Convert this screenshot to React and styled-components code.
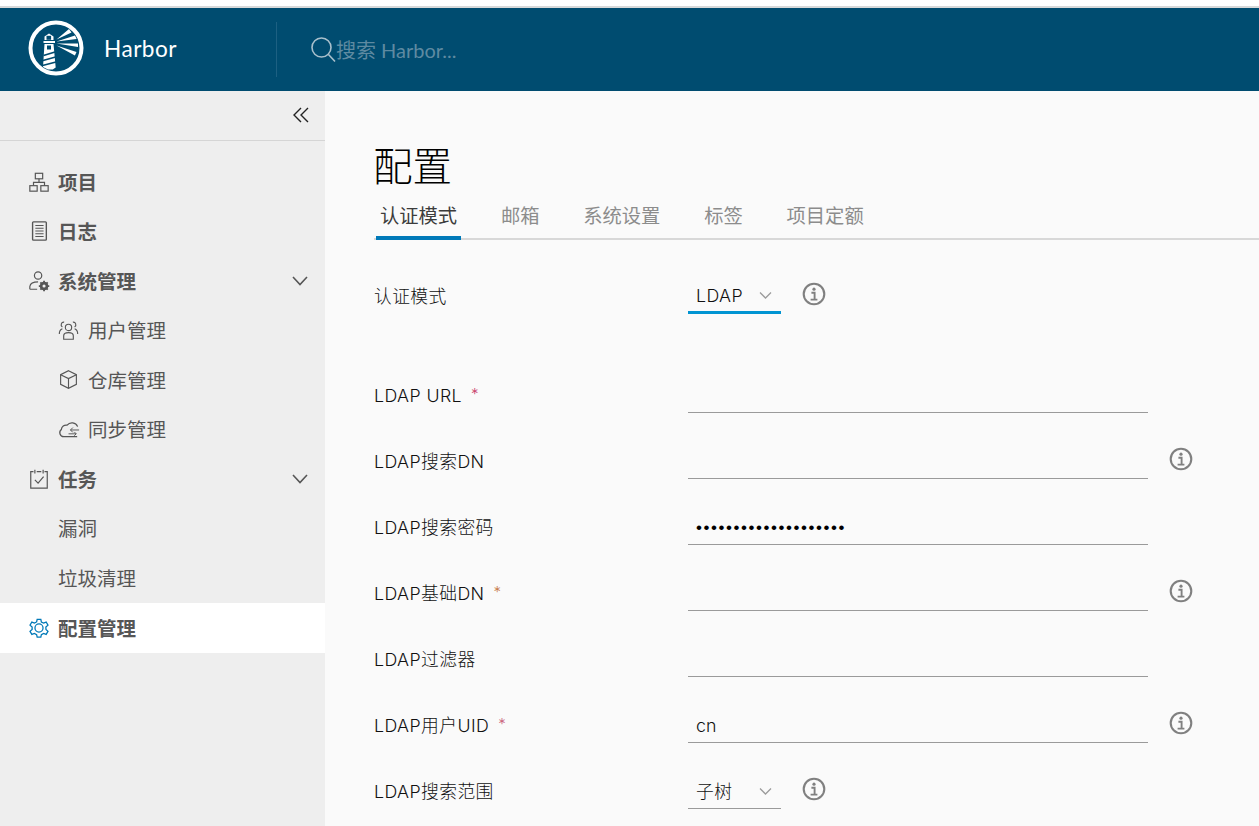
import React from 'react'
import styled, { createGlobalStyle } from 'styled-components'

const GlobalStyle = createGlobalStyle`
    html, body {
        margin: 0;
        padding: 0;
        height: 100%;
        overflow: hidden;
        background: #ffffff;
    }
    * {
        box-sizing: border-box;
    }
    body {
        font-family: "Inter", "Noto Sans CJK SC", sans-serif;
    }
`

const Page = styled.div`
    display: flex;
    flex-direction: column;
    height: 826px;
    overflow: hidden;
`

const TopStrip = styled.div`
    height: 8px;
    flex: none;
    background: #ffffff;
    border-bottom: 2px solid #d7d9da;
`

const Header = styled.header`
    display: flex;
    align-items: center;
    height: 83px;
    flex: none;
    background: #004c70;
`

const Brand = styled.div`
    display: flex;
    align-items: center;
    width: 277px;
    height: 55px;
    padding-left: 28px;
    padding-bottom: 3px;
    border-right: 1px solid #1d6082;
    color: #ffffff;
    font-size: 22.6px;
    font-family: "Lato", "Noto Sans CJK SC", sans-serif;
    letter-spacing: 0.5px;

    svg {
        margin-right: 20px;
    }
`

const Search = styled.div`
    display: flex;
    align-items: center;
    padding-left: 33px;
    color: #5e8aa1;
    font-size: 20px;
    font-family: "Lato", "Noto Sans CJK SC", sans-serif;
`

const Body = styled.div`
    display: flex;
    flex: 1;
    min-height: 0;
`

const Sidebar = styled.aside`
    width: 325px;
    flex: none;
    background: #eeeeee;
`

const Collapse = styled.div`
    display: flex;
    align-items: center;
    justify-content: flex-end;
    height: 50px;
    padding: 0 15px 2px 0;
    border-bottom: 1px solid #d5d5d5;
`

const NavList = styled.nav`
    display: flex;
    flex-direction: column;
    padding-top: 16px;
`

const NavRow = styled.div`
    display: flex;
    align-items: center;
    height: ${p => (p.$active ? '50px' : '49.5px')};
    padding-left: ${p => (p.$sub ? '58px' : '28px')};
    padding-right: 16px;
    background: ${p => (p.$active ? '#ffffff' : 'transparent')};
    color: #565656;
    font-size: 19.5px;
    line-height: 26px;
    font-weight: ${p => (p.$sub ? 400 : 700)};
    font-family: "Noto Sans CJK SC", sans-serif;
`

const NavIcon = styled.span`
    display: flex;
    width: 30px;
    flex: none;
`

const Chevron = styled.span`
    display: flex;
    margin-left: auto;
`

const Main = styled.main`
    flex: 1;
    min-width: 0;
    padding: 47px 0 0 49px;
    background: #fafafa;
`

const Title = styled.h1`
    margin: 0 0 0 -1px;
    height: 52px;
    color: #000000;
    font-size: 39.5px;
    line-height: 52px;
    font-weight: 300;
    font-family: "Noto Sans CJK SC", sans-serif;
`

const Tabs = styled.div`
    display: flex;
    gap: 35.8px;
    height: 50px;
    padding-left: 2px;
    border-bottom: 2px solid #d8d8d8;
`

const Tab = styled.div`
    height: 50px;
    padding: 11px 4px 0;
    color: ${p => (p.$active ? '#3c3c3c' : '#8c8c8c')};
    font-size: 19.3px;
    line-height: 28px;
    border-bottom: 4px solid ${p => (p.$active ? '#0079b8' : 'transparent')};
    font-family: "Noto Sans CJK SC", sans-serif;
`

const Form = styled.div`
    display: flex;
    flex-direction: column;
    padding-top: 24px;
`

const Row = styled.div`
    display: flex;
    align-items: center;
    height: 66px;
    margin-bottom: ${p => p.$gap || 0}px;
`

const Label = styled.label`
    display: flex;
    width: 314px;
    flex: none;
    color: #111111;
    font-size: 17.8px;
    font-weight: 300;
    line-height: 24px;
    letter-spacing: 0.4px;
`

const Required = styled.span`
    margin-left: 9px;
    color: ${p => p.$tone || '#c9406a'};
    font-size: 15px;
    line-height: 20px;
`

const Input = styled.div`
    display: flex;
    align-items: center;
    width: 460px;
    height: 34px;
    padding-left: 8px;
    border-bottom: 1px solid #9a9a9a;
    color: #111111;
    font-size: 17.8px;
    line-height: 24px;
    font-weight: 300;
`

const Dots = styled.span`
    font-size: 17px;
    letter-spacing: 1.55px;
    font-weight: 400;
    color: #000000;
    font-family: "Liberation Sans", sans-serif;
`

const Select = styled.div`
    display: flex;
    align-items: center;
    justify-content: space-between;
    width: 93px;
    height: 34px;
    padding: 0 9px 0 8px;
    border-bottom: ${p => (p.$focus ? '3px solid #0094d2' : '1px solid #9a9a9a')};
    color: #111111;
    font-size: 17.8px;
    line-height: 24px;
    font-weight: 300;
    letter-spacing: 0.4px;
`

const Info = styled.span`
    display: flex;
    margin: 0 0 6px 21px;
`

const Icon = ({ children, size = 22, color = '#565656', width = 1.3 }) => (
    <svg width={size} height={size} viewBox="0 0 24 24" fill="none" stroke={color} strokeWidth={width}>
        {children}
    </svg>
)

const InfoIcon = () => (
    <Info>
        <svg width="24" height="24" viewBox="0 0 24 24" fill="none" stroke="#808080">
            <circle cx="12" cy="12" r="10.3" strokeWidth="2.1" />
            <circle cx="12" cy="7.2" r="1.6" fill="#808080" stroke="none" />
            <path d="M9.4 10.8h3.2v6.6M8.6 17.6h6.8" strokeWidth="1.9" />
        </svg>
    </Info>
)

const Logo = () => (
    <svg width="56" height="56" viewBox="0 0 56 56">
        <circle cx="28" cy="28" r="25.5" fill="none" stroke="#ffffff" strokeWidth="4" />
        <path d="M16.5 16.5 21 13.5l4.5 3v3.5H16.5z" fill="#ffffff" />
        <path d="M18.5 15.8h4.6v4h-4.6z" fill="#004c70" />
        <path d="M15.5 21h11.5v2H15.5zM16.5 24h9l2.2 23.5-3 2H20L15 47z" fill="#ffffff" />
        <path d="M19 25.5h4v4h-4z" fill="#004c70" />
        <path d="M15.5 35.5 27 32M15 40.5 27.6 37M14.5 45.5 28 42" stroke="#004c70" strokeWidth="1.8" />
        <path d="M28.5 19.5 41 9l2.5 3.4zM28.5 21.5 47 15.5l1.6 3.6zM28.5 23.5H50v3.6zM28.5 25.5 48.5 32l-1.6 3.4z" fill="#ffffff" />
    </svg>
)

const SearchIcon = () => (
    <svg width="26" height="28" viewBox="0 0 26 28" fill="none" stroke="#a9c0cc" strokeWidth="1.6">
        <circle cx="11.5" cy="11.5" r="9.5" />
        <path d="m18.5 18.5 6.5 7" />
    </svg>
)

const ChevronsLeft = () => (
    <svg width="18" height="18" viewBox="0 0 18 18" fill="none" stroke="#222222" strokeWidth="1.4">
        <path d="M9 2 2 9l7 7M16 2 9 9l7 7" />
    </svg>
)

const ChevronDown = () => (
    <svg width="18" height="12" viewBox="0 0 18 12" fill="none" stroke="#565656" strokeWidth="1.6">
        <path d="m2 2 7 7.5L16 2" />
    </svg>
)

const SmallChevron = () => (
    <svg width="13" height="9" viewBox="0 0 13 9" fill="none" stroke="#9b9b9b" strokeWidth="1.3">
        <path d="m1 1.5 5.5 5.5L12 1.5" />
    </svg>
)

const projectIcon = (
    <Icon>
        <rect x="8" y="2.5" width="8" height="6" />
        <rect x="2" y="16" width="8" height="6" />
        <rect x="14" y="16" width="8" height="6" />
        <path d="M12 8.5v4M6 16v-3.5h12V16" />
    </Icon>
)

const logIcon = (
    <Icon>
        <rect x="5" y="2" width="15" height="20" rx="1" strokeWidth="1.5" />
        <path d="M8 6h9M8 9h9M8 12h9M8 15h9M8 18h9" strokeWidth="1.2" />
    </Icon>
)

const adminIcon = (
    <Icon>
        <circle cx="11" cy="6" r="4" />
        <path d="M2 21v-3c.5-3.5 4-5 9-5M2 21h8" />
        <circle cx="17.5" cy="17.5" r="3.2" strokeWidth="3" />
        <path d="M17.5 11.8v2.4M17.5 20.8v2.4M11.8 17.5h2.4M20.8 17.5h2.4M13.5 13.5l1.7 1.7M19.8 19.8l1.7 1.7M21.5 13.5l-1.7 1.7M15.2 19.8l-1.7 1.7" strokeWidth="2" />
    </Icon>
)

const usersIcon = (
    <Icon size={21}>
        <circle cx="12" cy="8.5" r="3.6" />
        <path d="M6.5 22v-4c0-2.5 2-3.5 5.5-3.5s5.5 1 5.5 3.5v4z" />
        <path d="M7 2.5a3 3 0 0 0-2 5.5M17 2.5a3 3 0 0 1 2 5.5M1.500 16c0-3 .8-5 3.5-6M22.5 16c0-3-.8-5-3.5-6" />
    </Icon>
)

const boxIcon = (
    <Icon size={21}>
        <path d="M12 2 21 6.5v11L12 22l-9-4.5v-11z" />
        <path d="m3 6.5 9 4.5 9-4.5M12 11v11" />
    </Icon>
)

const cloudIcon = (
    <Icon size={23}>
        <path d="M20.5 9A6.5 6.5 0 0 0 9.5 7.5 5 5 0 0 0 3.5 12a4.2 4.2 0 0 0 2.5 7.5h14" />
        <path d="M22 12.5h-9M15.500 10l-2.5 2.5 2.5 2.5M11 16.5h8M17 14.5l2 2-2 2" strokeWidth="1" />
    </Icon>
)

const taskIcon = (
    <Icon>
        <path d="M6 4H3v18h18V4h-3M9.5 4h5M7.5 2v4M16.5 2v4" />
        <path d="m7.5 13 3.5 3.5 6-7" />
    </Icon>
)

const gearIcon = (
    <Icon color="#0079b8" width={1.4}>
        <circle cx="12" cy="12" r="4.4" />
        <path d="M10 2.5h4l.6 3 2.4 1.2 2.8-1.2 2 3.4-2.3 2 .1 2.8 2.2 1.9-2 3.4-2.8-1-2.4 1.3-.6 2.7h-4l-.6-2.8-2.4-1.3-2.8 1.1-2-3.4 2.3-1.9v-2.8l-2.3-2 2-3.4 2.8 1.2 2.4-1.3z" />
    </Icon>
)

const navItems = [
    { label: '项目', icon: projectIcon },
    { label: '日志', icon: logIcon },
    { label: '系统管理', icon: adminIcon, open: true },
    { label: '用户管理', icon: usersIcon, sub: true },
    { label: '仓库管理', icon: boxIcon, sub: true },
    { label: '同步管理', icon: cloudIcon, sub: true },
    { label: '任务', icon: taskIcon, open: true },
    { label: '漏洞', sub: true, bare: true },
    { label: '垃圾清理', sub: true, bare: true },
    { label: '配置管理', icon: gearIcon, active: true },
]

const tabs = ['认证模式', '邮箱', '系统设置', '标签', '项目定额']

const fields = [
    { label: 'LDAP URL', required: '#c9406a' },
    { label: 'LDAP搜索DN', info: true },
    { label: 'LDAP搜索密码', value: <Dots>••••••••••••••••••••</Dots> },
    { label: 'LDAP基础DN', required: '#c77a4a', info: true },
    { label: 'LDAP过滤器' },
    { label: 'LDAP用户UID', required: '#c9607a', value: 'cn', info: true },
]

export default function App() {
    return (
        <Page>
            <GlobalStyle />
            <TopStrip />
            <Header>
                <Brand>
                    <Logo />
                    Harbor
                </Brand>
                <Search>
                    <SearchIcon />
                    搜索 Harbor...
                </Search>
            </Header>
            <Body>
                <Sidebar>
                    <Collapse>
                        <ChevronsLeft />
                    </Collapse>
                    <NavList>
                        {navItems.map(item => (
                            <NavRow key={item.label} $sub={item.sub} $active={item.active}>
                                {!item.bare && <NavIcon>{item.icon}</NavIcon>}
                                {item.label}
                                {item.open && <Chevron><ChevronDown /></Chevron>}
                            </NavRow>
                        ))}
                    </NavList>
                </Sidebar>
                <Main>
                    <Title>配置</Title>
                    <Tabs>
                        {tabs.map((tab, i) => (
                            <Tab key={tab} $active={i === 0}>{tab}</Tab>
                        ))}
                    </Tabs>
                    <Form>
                        <Row $gap={33}>
                            <Label>认证模式</Label>
                            <Select $focus>LDAP <SmallChevron /></Select>
                            <InfoIcon />
                        </Row>
                        {fields.map(field => (
                            <Row key={field.label}>
                                <Label>
                                    {field.label}
                                    {field.required && <Required $tone={field.required}>*</Required>}
                                </Label>
                                <Input>{field.value}</Input>
                                {field.info && <InfoIcon />}
                            </Row>
                        ))}
                        <Row>
                            <Label>LDAP搜索范围</Label>
                            <Select>子树 <SmallChevron /></Select>
                            <InfoIcon />
                        </Row>
                    </Form>
                </Main>
            </Body>
        </Page>
    )
}
